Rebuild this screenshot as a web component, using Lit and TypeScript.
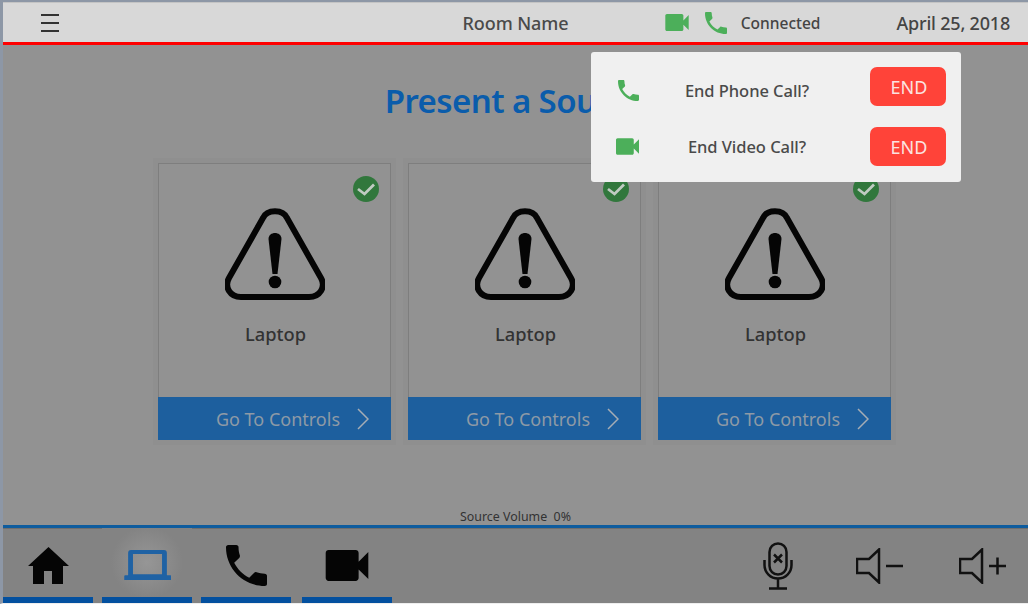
import { LitElement, html, css, svg } from 'lit'
import { customElement } from 'lit/decorators.js'

const phone = svg`<path d="M6.6 10.8c1.4 2.8 3.8 5.1 6.6 6.6l2.2-2.2c.3-.3.7-.4 1-.2 1.1.4 2.3.6 3.600.6.6 0 1 .4 1 1V20c0 .6-.4 1-1 1C10.6 21 3 13.400 3 4c0-.6.4-1 1-1h3.500c.6 0 1 .4 1 1 0 1.300.2 2.500.6 3.600.1.300 0 .7-.2 1z"/>`
const camera = svg`<path d="M1 1.500C1 .7 1.700 0 2.500 0h14C17.300 0 18 .7 18 1.500V6l5-5v14l-5-5v4.500c0 .8-.7 1.500-1.500 1.500h-14C1.700 16 1 15.300 1 14.500z"/>`

const sources = ['Laptop', 'Laptop', 'Laptop']

@customElement('app-root')
export class AppRoot extends LitElement {
  static styles = css`
    :host {
      display: block;
      width: 1028px;
      height: 604px;
      font-family: 'Noto Sans', sans-serif;
      color: #444;
    }
    .frame {
      position: relative;
      box-sizing: border-box;
      width: 1028px;
      height: 604px;
      display: flex;
      flex-direction: column;
      background: #929292;
      border-top: 2px solid #8d97a6;
      border-left: 3px solid #8d97a6;
      border-bottom: 1px solid #eee;
      overflow: hidden;
    }
    .topbar {
      height: 39px;
      flex: none;
      display: grid;
      grid-template-columns: 1fr auto 1fr;
      align-items: center;
      background: #d8d8d8;
      border-top: 1px solid #c4c4c4;
      border-bottom: 3px solid #f00;
      padding: 0 18px;
    }
    .burger { width: 18px; margin-left: 20px; display: flex; flex-direction: column; gap: 6px; }
    .burger i { display: block; height: 2px; background: #333; }
    .room { font-size: 18px; font-weight: 500; color: #4a4a4a; letter-spacing: -0.1px; }
    .status { display: flex; align-items: center; justify-content: flex-end; }
    .status .cam { width: 24px; height: 17px; fill: #4caf5a; margin-right: 16px; }
    .status .ph { width: 22px; height: 22px; fill: #4caf5a; margin-right: 14px; }
    .conn { font-size: 15.5px; font-weight: 500; margin-right: 76px; }
    .date { font-size: 18px; font-weight: 500; letter-spacing: -0.2px; }
    .main { flex: 1; display: flex; flex-direction: column; align-items: center; }
    h1 {
      margin: 33px 2px 0 0;
      font-size: 33px;
      line-height: 46px;
      font-weight: 600;
      color: #0a5cab;
      letter-spacing: -0.6px;
    }
    .cards { display: flex; gap: 17px; margin: 39px 0 0 18px; }
    .card {
      width: 233px;
      height: 277px;
      box-sizing: border-box;
      border: 1px solid #7e7e7e;
      border-bottom: none;
      display: flex;
      flex-direction: column;
      position: relative;
      box-shadow: 0 0 0 5px #8f8f8f;
    }
    .body { flex: 1; display: flex; flex-direction: column; align-items: center; padding-top: 44px; }
    .warn { width: 100px; height: 92px; }
    .label { font-size: 18.3px; font-weight: 500; margin: 21px 0 0 2px; color: #333; }
    .check { position: absolute; top: 12px; right: 11px; width: 26px; height: 26px; }
    .go {
      height: 43px;
      margin: 0 -1px;
      background: #1d5f9e;
      color: #8e9aa6;
      font-size: 18px;
      display: flex;
      align-items: center;
      justify-content: flex-end;
      gap: 17px;
      padding-right: 22px;
    }
    .go svg { width: 12px; height: 22px; }
    .volume { margin-top: auto; font-size: 12.4px; color: #333; height: 19px; line-height: 22px; }
    .bottom {
      height: 78px;
      flex: none;
      box-sizing: border-box;
      border-top: 3px solid #0e5c9e;
      box-shadow: inset 0 1px 0 #6f6f6f;
      background: #838383;
      display: flex;
      align-items: stretch;
    }
    .tabs { display: flex; gap: 9px; }
    .tab { width: 90px; display: flex; align-items: center; justify-content: center; border-bottom: 6px solid #03509f; box-sizing: border-box; padding-top: 6px; }
    .tab:nth-child(4) { margin-left: 2px; }
    .tab.active { background: radial-gradient(circle 36px at center, #969696, #838383 100%); }
    .tab svg { fill: #050505; }
    .tab.active svg { fill: #1f62a4; }
    .controls { margin-left: auto; display: flex; align-items: center; gap: 55px; padding-right: 21px; }
    .controls svg { fill: none; stroke: #111; stroke-width: 2.5; }
    .controls .mic { margin-right: 8px; }
    .popup {
      position: absolute;
      left: 588px;
      top: 50px;
      width: 370px;
      height: 130px;
      box-sizing: border-box;
      background: #f0f0f0;
      border-radius: 3px;
      padding: 15px 15px 0 25px;
      display: flex;
      flex-direction: column;
      gap: 21px;
    }
    .row { display: flex; align-items: center; height: 39px; }
    .row .icon { width: 25px; flex: none; display: flex; align-items: center; fill: #4caf5a; }
    .row .label-text { flex: 1; text-align: center; font-size: 16.5px; font-weight: 500; letter-spacing: -0.05px; color: #4a4a4a; padding-right: 17px; }
    .row.low .icon, .row.low .label-text { padding-top: 7px; }
    .row.low .icon { padding-left: 2px; width: 23px; }
    .end {
      width: 76px;
      height: 39px;
      flex: none;
      border: none;
      border-radius: 7px;
      background: #ff4339;
      color: #fbe3e1;
      font: 400 18px 'Noto Sans', sans-serif;
      padding: 0 0 0 2px;
    }
  `

  render() {
    return html`
      <div class="frame">
        <header class="topbar">
          <div class="burger"><i></i><i></i><i></i></div>
          <div class="room">Room Name</div>
          <div class="status">
            <svg class="cam" viewBox="1 0 22 16">${camera}</svg>
            <svg class="ph" viewBox="3 3 18 18">${phone}</svg>
            <span class="conn">Connected</span>
            <span class="date">April 25, 2018</span>
          </div>
        </header>
        <main class="main">
          <h1>Present a Source</h1>
          <div class="cards">
            ${sources.map(name => html`
              <div class="card">
                <svg class="check" viewBox="0 0 26 26">
                  <circle cx="13" cy="13" r="13" fill="#31773c"/>
                  <path d="M5 13l6.500 5L21 8.500" fill="none" stroke="#c0cbc2" stroke-width="2.800"/>
                </svg>
                <div class="body">
                  <svg class="warn" viewBox="0 0 100 92">
                    <path d="M38 10C42 1 58 1 62 10L96 70C101 79 95 89 84 89H16C5 89-1 79 4 70Z" fill="none" stroke="#050505" stroke-width="6"/>
                    <path d="M43.500 31c0-8 13-8 13 0L52.500 66h-5z" fill="#050505"/>
                    <circle cx="50" cy="74" r="6.300" fill="#050505"/>
                  </svg>
                  <div class="label">${name}</div>
                </div>
                <div class="go">
                  <span>Go To Controls</span>
                  <svg viewBox="0 0 12 22"><path d="M1 1l10 10L1 21" fill="none" stroke="#a5adb5" stroke-width="1.500"/></svg>
                </div>
              </div>`)}
          </div>
          <div class="volume">Source Volume&nbsp; 0%</div>
        </main>
        <footer class="bottom">
          <div class="tabs">
            <div class="tab">
              <svg width="41" height="37" viewBox="0 0 41 37"><path d="M20.500 0L41 19H35V37H24V24H16V37H5V19H0Z"/></svg>
            </div>
            <div class="tab active">
              <svg width="47" height="31" viewBox="0 0 48 32"><path fill-rule="evenodd" d="M7 0h34a3 3 0 0 1 3 3v23h3.500a1 1 0 0 1 1 1v4H0v-4a1 1 0 0 1 1-1h3V3a3 3 0 0 1 3-3zm2 4v21h30V4z"/></svg>
            </div>
            <div class="tab">
              <svg width="41" height="41" viewBox="3 3 18 18">${phone}</svg>
            </div>
            <div class="tab">
              <svg width="46" height="31" viewBox="1 0 22 16">${camera}</svg>
            </div>
          </div>
          <div class="controls">
            <svg class="mic" width="30" height="48" viewBox="0 0 30 48">
              <rect x="6.500" y="1.500" width="17" height="31" rx="8.500"/>
              <path d="M1.500 18v5a13.500 13.500 0 0 0 27 0v-5M15 37v9M6 46.500h18M11 12.500l8 8M19 12.500l-8 8"/>
            </svg>
            <svg width="48" height="36" viewBox="0 0 48 36">
              <path d="M1 11h12L23 1.500v33L13 25H1zM30 18h17"/>
            </svg>
            <svg width="48" height="36" viewBox="0 0 48 36">
              <path d="M1 11h12L23 1.500v33L13 25H1zM30 18h17M38.500 9.500v17"/>
            </svg>
          </div>
        </footer>
        <div class="popup">
          <div class="row low">
            <span class="icon"><svg width="21" height="21" viewBox="3 3 18 18">${phone}</svg></span>
            <span class="label-text">End Phone Call?</span>
            <button class="end">END</button>
          </div>
          <div class="row">
            <span class="icon"><svg width="23" height="17" viewBox="1 0 22 16">${camera}</svg></span>
            <span class="label-text">End Video Call?</span>
            <button class="end">END</button>
          </div>
        </div>
      </div>
    `
  }
}
